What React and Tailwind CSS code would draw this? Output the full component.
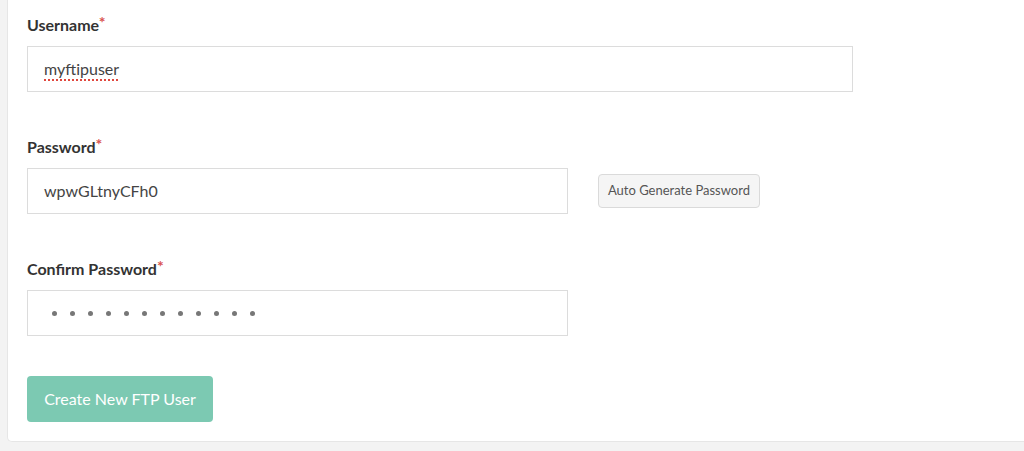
export default function App() {
  const font = { fontFamily: 'Lato, "Liberation Sans", sans-serif' };

  const Star = () => <span className="relative top-[-3px] text-[16px] font-bold text-[#d9534f]">*</span>;

  return (
    <div className="h-[451px] w-[1024px] overflow-hidden bg-[#f3f3f3] pl-[7px]" style={font}>
      <div className="h-[442px] w-[1040px] rounded-bl-[5px] border-b border-l border-[#e6e6e6] bg-white pl-[19px] pt-[13px]">
        {/* Username */}
        <div className="mb-[43px]">
          <label className="mb-[9px] block h-6 text-[16px] font-bold leading-6 text-[#333]">
            Username<Star />
          </label>
          <div className="flex h-[46px] w-[826px] items-center border border-[#dcdcdc] px-4 text-[16px] text-[#444]">
            <span className="underline decoration-[#e0473e] decoration-dotted decoration-2 underline-offset-4">myftipuser</span>
          </div>
        </div>

        {/* Password */}
        <div className="mb-[43px]">
          <label className="mb-[9px] block h-6 text-[16px] font-bold leading-6 text-[#333]">
            Password<Star />
          </label>
          <div className="flex items-center gap-[30px]">
            <div className="flex h-[46px] w-[541px] items-center border border-[#dcdcdc] px-4 text-[16px] text-[#444]">
              wpwGLtnyCFh0
            </div>
            <button className="h-[34px] w-[162px] rounded-[4px] border border-[#dadada] bg-[#f5f5f5] text-[13px] text-[#555]">
              Auto Generate Password
            </button>
          </div>
        </div>

        {/* Confirm Password */}
        <div className="mb-[40px]">
          <label className="mb-[9px] block h-6 text-[16px] font-bold leading-6 text-[#333]">
            Confirm Password<Star />
          </label>
          <div className="flex h-[46px] w-[541px] items-center gap-[13px] border border-[#dcdcdc] pl-[24px]">
            {Array.from({ length: 12 }).map((_, i) => (
              <span key={i} className="h-[5px] w-[5px] rounded-full bg-[#777]" />
            ))}
          </div>
        </div>

        <button className="h-[46px] w-[186px] rounded-[4px] bg-[#7cc9b2] text-[16px] text-white">
          Create New FTP User
        </button>
      </div>
    </div>
  );
}
